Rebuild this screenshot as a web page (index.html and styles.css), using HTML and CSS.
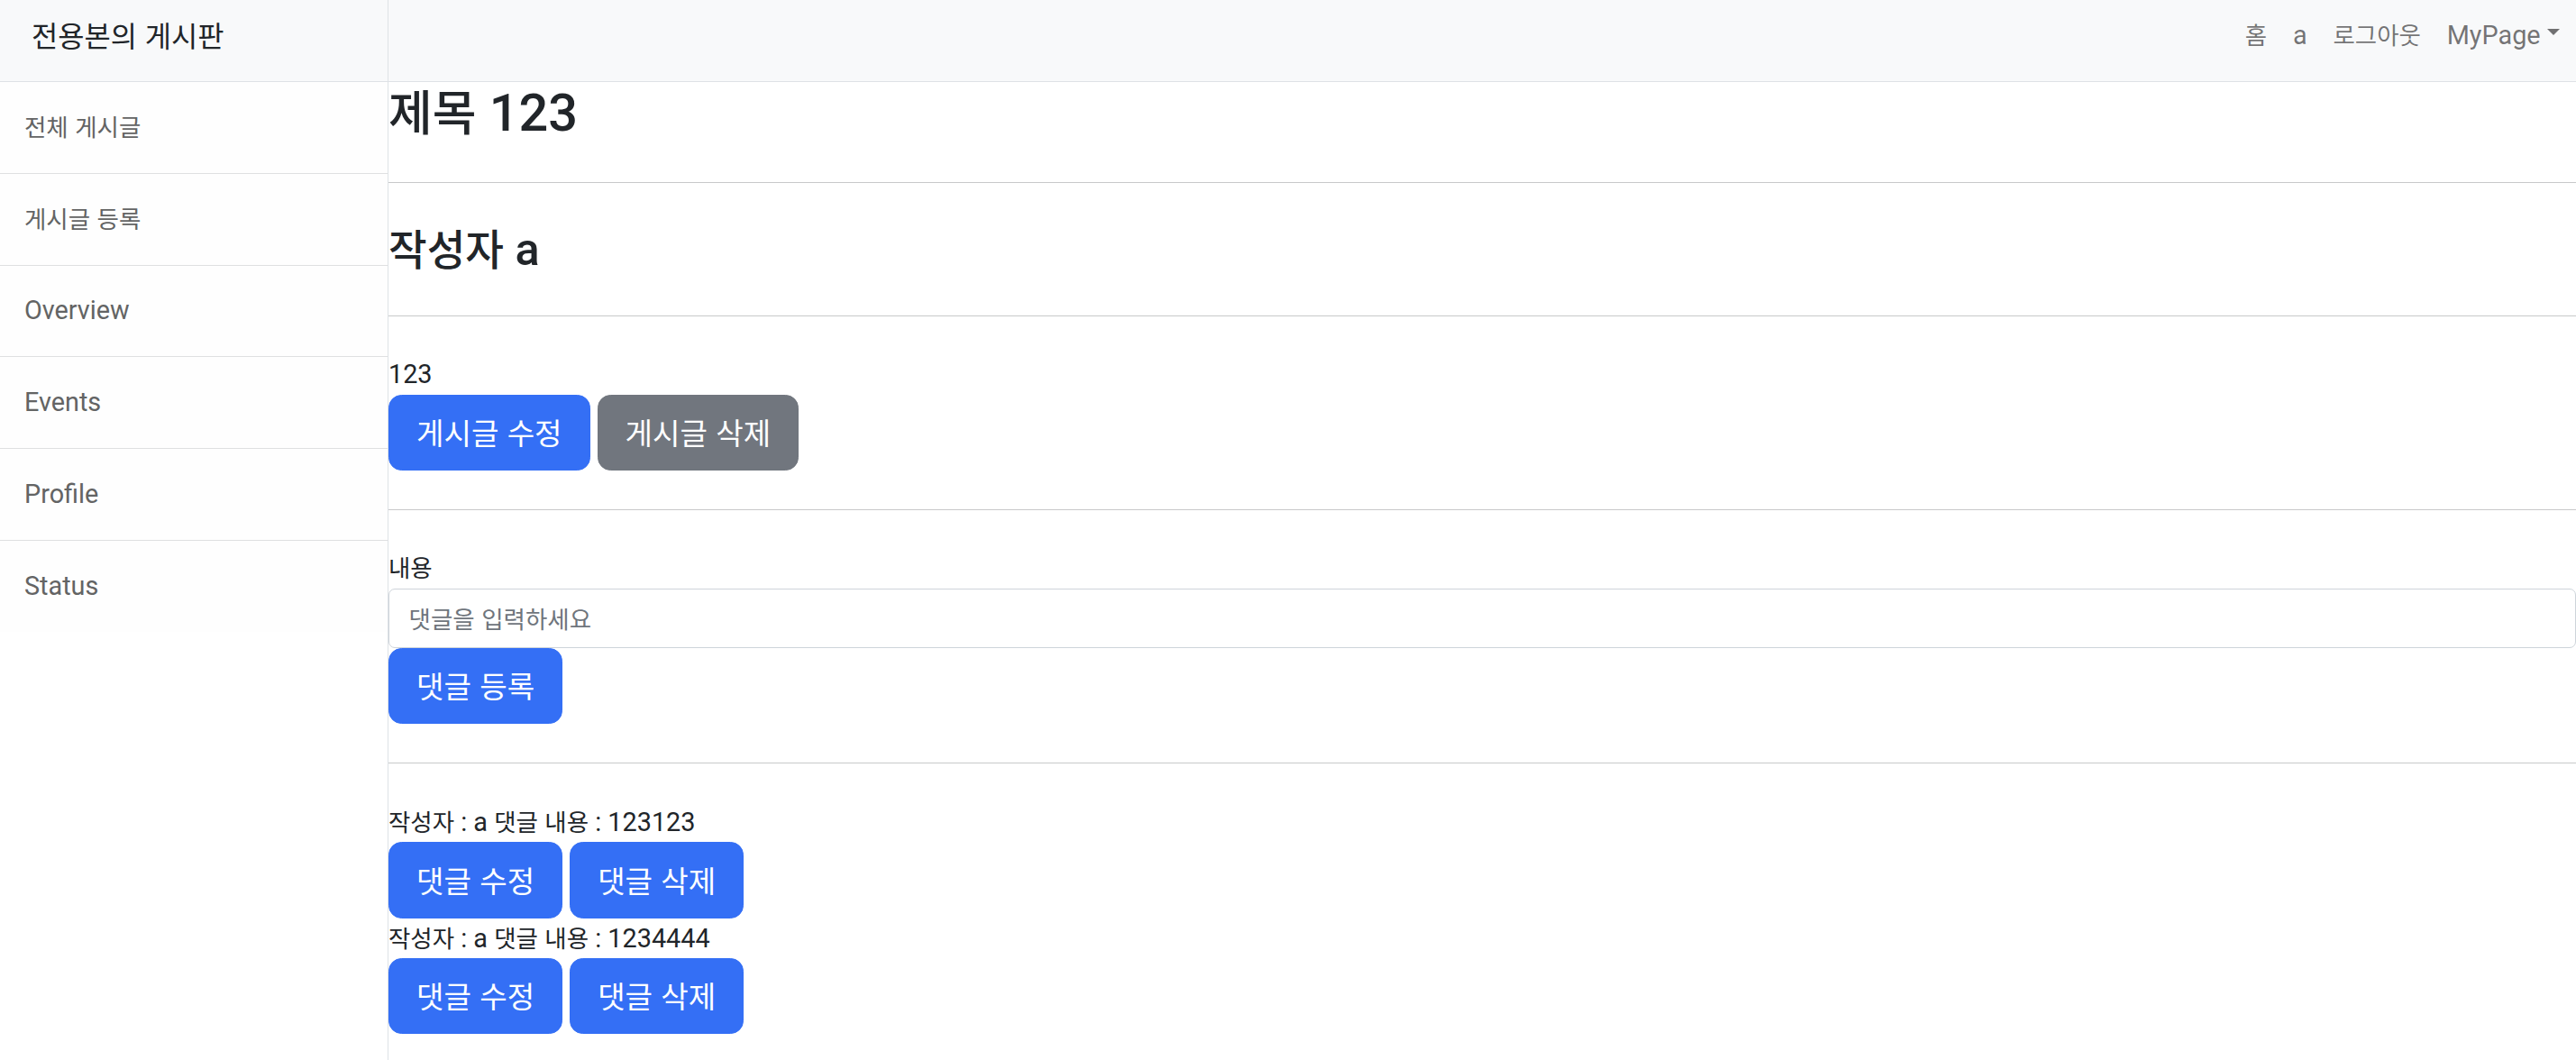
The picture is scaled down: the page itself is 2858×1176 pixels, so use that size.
FILE: index.html
```html
<!DOCTYPE html>
<html lang="ko">
<head>
<meta charset="utf-8">
<title>전용본의 게시판</title>
<link rel="stylesheet" href="styles.css">
</head>
<body>
<div class="wrapper">
  <aside class="sidebar">
    <div class="sidebar-heading"><span class="ko">전용본의 게시판</span></div>
    <nav class="side-list">
      <a class="side-item" href="#"><span class="ko">전체 게시글</span></a>
      <a class="side-item" href="#"><span class="ko">게시글 등록</span></a>
      <a class="side-item" href="#">Overview</a>
      <a class="side-item" href="#">Events</a>
      <a class="side-item" href="#">Profile</a>
      <a class="side-item side-item-last" href="#">Status</a>
    </nav>
  </aside>
  <div class="page">
    <header class="topbar">
      <ul class="nav">
        <li><a class="nav-link" href="#"><span class="ko">홈</span></a></li>
        <li><a class="nav-link" href="#">a</a></li>
        <li><a class="nav-link" href="#"><span class="ko">로그아웃</span></a></li>
        <li><a class="nav-link dropdown-toggle" href="#">MyPage</a></li>
      </ul>
    </header>
    <main class="content">
      <h2 class="title"><span class="ko">제목</span> 123</h2>
      <hr class="rule">
      <h3 class="author"><span class="ko">작성자</span> a</h3>
      <hr class="rule">
      <p class="body-text">123</p>
      <div class="actions">
        <button class="btn btn-primary" type="button"><span class="ko">게시글 수정</span></button>
        <button class="btn btn-secondary" type="button"><span class="ko">게시글 삭제</span></button>
      </div>
      <hr class="rule">
      <form class="comment-form">
        <label class="form-label" for="comment"><span class="ko">내용</span></label>
        <input class="form-control" id="comment" type="text" placeholder="댓글을 입력하세요">
        <div class="actions">
          <button class="btn btn-primary" type="button"><span class="ko">댓글 등록</span></button>
        </div>
      </form>
      <hr class="rule">
      <div class="comment">
        <p class="comment-text"><span class="ko">작성자</span> : a <span class="ko">댓글 내용</span> : 123123</p>
        <div class="comment-actions">
          <button class="btn btn-primary" type="button"><span class="ko">댓글 수정</span></button>
          <button class="btn btn-primary" type="button"><span class="ko">댓글 삭제</span></button>
        </div>
      </div>
      <div class="comment">
        <p class="comment-text"><span class="ko">작성자</span> : a <span class="ko">댓글 내용</span> : 1234444</p>
        <div class="comment-actions">
          <button class="btn btn-primary" type="button"><span class="ko">댓글 수정</span></button>
          <button class="btn btn-primary" type="button"><span class="ko">댓글 삭제</span></button>
        </div>
      </div>
    </main>
  </div>
</div>
</body>
</html>
```
FILE: styles.css
```css
* {
  box-sizing: border-box;
}

html, body {
  margin: 0;
  padding: 0;
}

body {
  font-family: Roboto, "Noto Sans CJK KR", sans-serif;
  font-size: 28.8px;
  line-height: 43.2px;
  color: #212529;
  background: #ffffff;
  overflow: hidden;
}

.ko {
  font-family: "Noto Sans CJK KR", sans-serif;
  font-size: 0.92em;
  line-height: 1;
}

.wrapper {
  display: flex;
  min-height: 100vh;
}

/* Sidebar */
.sidebar {
  width: 431px;
  flex: 0 0 431px;
  background: #ffffff;
  border-right: 1px solid #dee2e6;
}

.sidebar-heading {
  height: 91px;
  padding: 14px 0 0 35px;
  font-size: 34.56px;
  line-height: 52px;
  color: #212529;
  background: #f8f9fa;
  border-bottom: 1px solid #dee2e6;
}

.side-list {
  display: flex;
  flex-direction: column;
}

.side-item {
  display: block;
  padding: 28.8px 27px;
  line-height: 43.2px;
  color: #636464;
  text-decoration: none;
  background: #fefefe;
  border-bottom: 1px solid #dfe0e1;
}

.side-item-last {
  border-bottom: 0;
}

/* Page */
.page {
  flex: 1 1 auto;
  min-width: 0;
}

.topbar {
  height: 91px;
  padding: 18px 4px 0 0;
  background: #f8f9fa;
  border-bottom: 1px solid #dee2e6;
}

.nav {
  list-style: none;
  margin: 0;
  padding: 0;
  display: flex;
  justify-content: flex-end;
}

.nav-link {
  display: block;
  padding: 0 14.4px;
  line-height: 43.2px;
  color: rgba(0, 0, 0, 0.55);
  text-decoration: none;
}

.dropdown-toggle::after {
  content: "";
  display: inline-block;
  margin-left: 7px;
  vertical-align: 0.34em;
  border-top: 7px solid;
  border-left: 7px solid transparent;
  border-right: 7px solid transparent;
}

/* Content */
.content {
  display: flex;
  flex-direction: column;
  align-items: stretch;
}

.title {
  margin: 0 0 13.5px;
  font-size: 57.6px;
  line-height: 69.1px;
  font-weight: 500;
}

.author {
  margin: 0 0 14.4px;
  font-size: 50.4px;
  line-height: 60.5px;
  font-weight: 500;
}

.rule {
  width: 100%;
  margin: 28.8px 0 43.2px;
  border: 0;
  border-top: 1px solid #c8c9ca;
  height: 0;
}

.body-text {
  margin: 0;
}

.actions {
  display: flex;
  gap: 8px;
  margin-bottom: 14.4px;
}

.btn {
  display: inline-flex;
  align-items: center;
  justify-content: center;
  height: 84.4px;
  padding: 0 30px;
  font-family: Roboto, "Noto Sans CJK KR", sans-serif;
  font-size: 36px;
  line-height: 54px;
  font-weight: 400;
  color: #ffffff;
  border: 1px solid transparent;
  border-radius: 14.4px;
  cursor: pointer;
}

.btn-primary {
  background: #346ff5;
  border-color: #346ff5;
}

.btn-secondary {
  background: #71767e;
  border-color: #71767e;
}

.comment-form {
  display: flex;
  flex-direction: column;
  margin: 0;
}

.form-label {
  display: block;
}

.form-control {
  display: block;
  width: 100%;
  height: 66px;
  padding: 0 21.6px;
  font-family: "Noto Sans CJK KR", sans-serif;
  font-size: 26.5px;
  color: #212529;
  background: #ffffff;
  border: 1px solid #ced4da;
  border-radius: 7px;
  outline: none;
}

.form-control::placeholder {
  color: #6f757c;
}

.comment {
  display: flex;
  flex-direction: column;
}

.comment-text {
  margin: 0;
  line-height: 44px;
}

.comment-actions {
  display: flex;
  gap: 8px;
}
```
